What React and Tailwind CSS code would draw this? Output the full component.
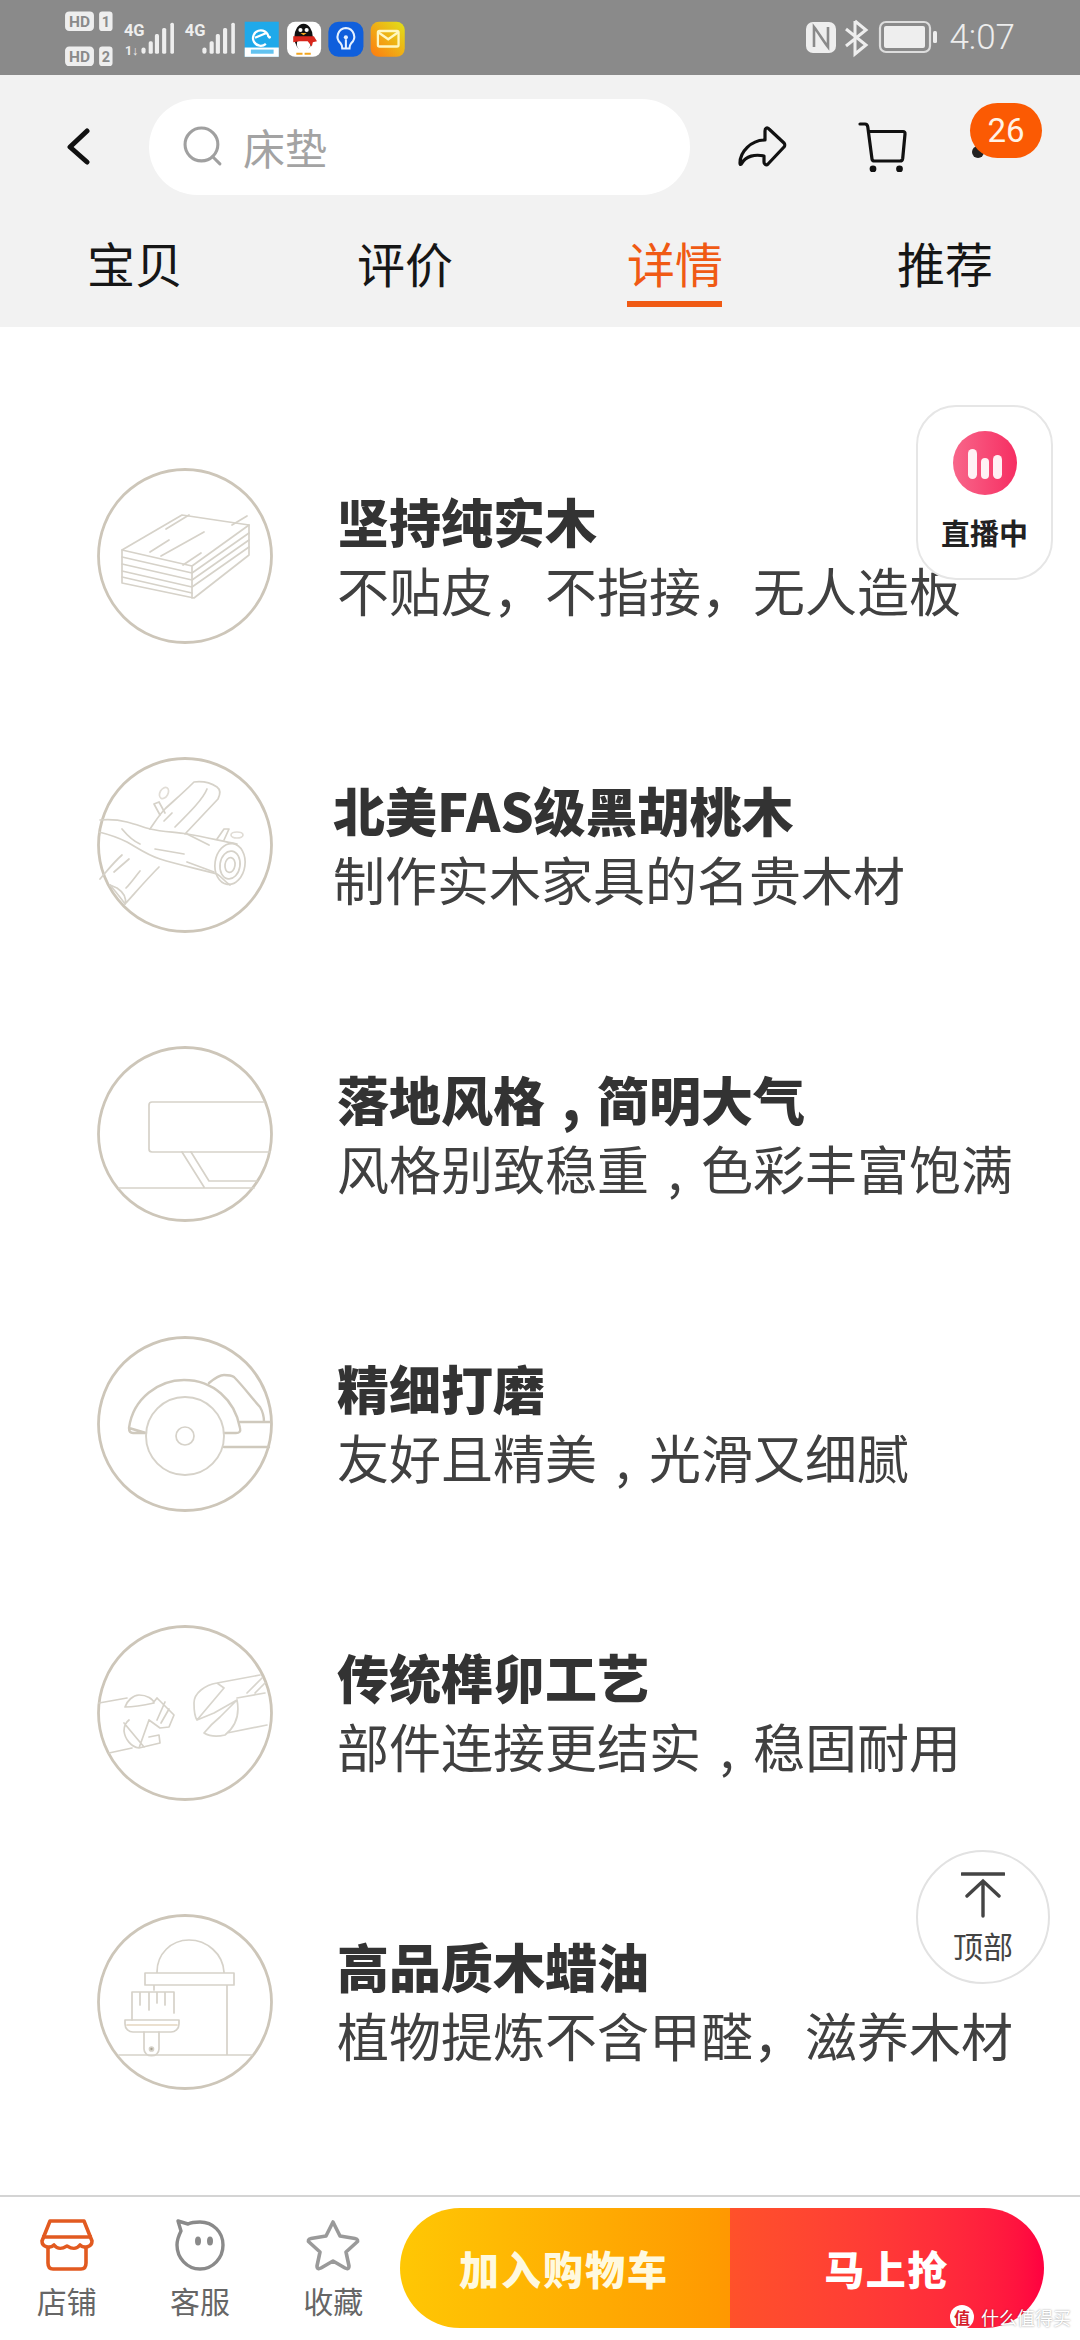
import React from "react";

const CJK = { fontFamily: '"Noto Sans CJK SC", sans-serif' };

function StatusLeft() {
  return (
    <svg width="413" height="77.5" viewBox="0 0 400 75" className="absolute left-0 top-0" fill="none">
      <rect x="63" y="11" width="28" height="19" rx="4" fill="#eee" />
      <text x="77" y="26" textAnchor="middle" fontSize="15" fontWeight="700" fill="#8a8a8a" fontFamily="Roboto">HD</text>
      <rect x="96" y="11" width="13" height="19" rx="3" fill="#eee" />
      <text x="102.5" y="26" textAnchor="middle" fontSize="14" fontWeight="700" fill="#8a8a8a" fontFamily="Roboto">1</text>
      <rect x="63" y="45" width="28" height="19" rx="4" fill="#eee" />
      <text x="77" y="60" textAnchor="middle" fontSize="15" fontWeight="700" fill="#8a8a8a" fontFamily="Roboto">HD</text>
      <rect x="96" y="45" width="13" height="19" rx="3" fill="#eee" />
      <text x="102.5" y="60" textAnchor="middle" fontSize="14" fontWeight="700" fill="#8a8a8a" fontFamily="Roboto">2</text>
      <text x="120" y="35" fontSize="16" fontWeight="700" fill="#eee" fontFamily="Roboto">4G</text>
      <text x="121" y="53" fontSize="12" fontWeight="700" fill="#eee" fontFamily="Roboto">1↓</text>
      <text x="179" y="35" fontSize="16" fontWeight="700" fill="#eee" fontFamily="Roboto">4G</text>
      <g fill="#eee">
        <rect x="137" y="46" width="4" height="6" rx="2" />
        <rect x="144" y="40" width="4" height="12" rx="1.5" />
        <rect x="150" y="33" width="4" height="19" rx="1.5" />
        <rect x="157" y="27" width="4" height="25" rx="1.5" />
        <rect x="165" y="22" width="3.5" height="30" rx="1.5" />
        <rect x="196" y="46" width="4" height="6" rx="2" />
        <rect x="203" y="40" width="4" height="12" rx="1.5" />
        <rect x="209" y="33" width="4" height="19" rx="1.5" />
        <rect x="216" y="27" width="4" height="25" rx="1.5" />
        <rect x="224" y="22" width="3.5" height="30" rx="1.5" />
      </g>
      {/* eleme */}
      <rect x="237" y="21" width="33" height="34" fill="#1fa9ea" />
      <rect x="237" y="46" width="33" height="9" fill="#fff" />
      <path d="M260 36a7.500 7.500 0 1 0-2.500 6.500M247 36.500l11-4.500" stroke="#fff" strokeWidth="2.200" />
      <circle cx="261" cy="36" r="1.400" fill="#fff" />
      <rect x="243" y="48" width="22" height="4" fill="#1fa9ea" opacity=".7" />
      {/* qq */}
      <rect x="278" y="21" width="33" height="34" rx="8" fill="#fff" />
      <ellipse cx="294" cy="36" rx="9" ry="13" fill="#111" />
      <ellipse cx="294" cy="43" rx="6.500" ry="7" fill="#fff" />
      <path d="M284 35h20l3 5-4 1-1 4-4-5h-8l-6 1z" fill="#d8271c" />
      <circle cx="291" cy="29" r="2" fill="#fff" />
      <circle cx="297" cy="29" r="2" fill="#fff" />
      <path d="M291 32h6l-3 2z" fill="#f2a51f" />
      <path d="M287 52h6M295 52h6" stroke="#f2a51f" strokeWidth="2" />
      {/* bulb */}
      <rect x="318" y="21" width="34" height="34" rx="10" fill="#0f5fdc" />
      <path d="M335 27a8.500 8.500 0 0 0-5 15c1 1 1.500 3 1.500 5h7c0-2 .5-4 1.500-5a8.500 8.500 0 0 0-5-15zM335 38v9" stroke="#e5f1ff" strokeWidth="2" />
      <circle cx="335" cy="36" r="2" fill="#e5f1ff" />
      {/* mail */}
      <defs>
        <linearGradient id="ml" x1="0" y1="1" x2="1" y2="0">
          <stop offset="0" stopColor="#ff7a10" />
          <stop offset="1" stopColor="#dfe21a" />
        </linearGradient>
      </defs>
      <rect x="359" y="21" width="33" height="34" rx="8" fill="url(#ml)" />
      <rect x="366" y="30" width="20" height="15" rx="1.500" stroke="#fff7c0" strokeWidth="2.200" />
      <path d="M366 31l10 7 10-7" stroke="#fff7c0" strokeWidth="2.200" />
    </svg>
  );
}

function StatusRight() {
  return (
    <div className="absolute right-[65px] top-0 flex h-[75px] items-center">
      <svg width="142" height="40" viewBox="-10 0 142 40" fill="none" className="mr-[11px]">
        <rect x="0" y="4" width="30" height="31" rx="7" fill="#eee" />
        <path d="M8 29V9C12 14 18 24 22 29V9" stroke="#8a8a8a" strokeWidth="2.600" />
        <path d="M49 3v33l11-9-20-16M49 3l11 9-20 16" stroke="#eee" strokeWidth="3" />
        <rect x="74" y="4" width="50" height="30" rx="6" stroke="#ddd" strokeWidth="2.200" />
        <rect x="78" y="8" width="41" height="22" rx="2" fill="#eee" />
        <rect x="127" y="13" width="4" height="12" rx="1.500" fill="#eee" />
      </svg>
      <span className="text-[35px] leading-none text-[#ededed]" style={{ fontFamily: "Roboto, sans-serif", fontWeight: 300 }}>4:07</span>
    </div>
  );
}

function Circle({ children }) {
  return (
    <svg width="176" height="176" viewBox="0 0 176 176" fill="none" className="shrink-0">
      <circle cx="88" cy="88" r="86.500" stroke="#cdc6b9" strokeWidth="2.800" />
      <g stroke="#d6d2c9" strokeWidth="1.700" strokeLinecap="round" strokeLinejoin="round">{children}</g>
    </svg>
  );
}

const I1 = (
  <Circle>
    <path d="M25 82L85 47L152 57V87L97 130L25 115Z" />
    <path d="M25 82L95 98L152 57M95 98V130" />
    <path d="M25 89L95 105L152 65M25 96L95 112L152 72M25 103L95 119L152 79M25 109L95 125" />
    <path d="M53 80L72 68M64 84L107 60M86 93L104 81M69 57L92 43M135 53L150 44" transform="translate(0 4)" />
  </Circle>
);
const I2 = (
  <Circle>
    <path d="M3 63C14 62 22 63 30 65C38 67 46 70 53 72C66 75 78 75 90 77C108 80 124 84 140 87" />
    <path d="M2 75C14 78 22 81 30 85C42 92 52 99 63 102C82 108 102 112 120 117C125 120 128 125 133 128" />
    <ellipse cx="133" cy="107" rx="15" ry="20.500" transform="rotate(8 133 107)" />
    <ellipse cx="133" cy="108" rx="10" ry="14" transform="rotate(8 133 108)" />
    <ellipse cx="133" cy="108" rx="5" ry="7.500" transform="rotate(8 133 108)" />
    <path d="M53 72C58 65 62 58 68 52C73 47 84 38 97 25C105 24 114 26 120 30C124 33 123 38 121 42L88 77" />
    <path d="M110 32C106 42 94 54 78 70M67 64L75 56" />
    <path d="M62 110C50 122 38 136 28 147C30 140 26 135 20 131L13 128M25 98C16 106 10 114 3 122M43 114C38 120 34 126 29 131M32 102L17 115" />
    <path d="M13 128C18 134 24 141 28 147" />
    <path d="M57 47L63 58M62 45L68 56M57 47L62 45" />
    <ellipse cx="67" cy="36" rx="4" ry="6" transform="rotate(30 67 36)" stroke="#e1ddd6" />
    <ellipse cx="140" cy="78" rx="6" ry="3" stroke="#e1ddd6" />
    <path d="M120 82L127 72L132 72L127 83" />
    <path d="M25 72C30 78 36 84 43 87M58 92L87 97M90 105L117 115M90 77L112 88" />
  </Circle>
);
const I3 = (
  <Circle>
    <path d="M167 56H55a3 3 0 0 0-3 3V103a3 3 0 0 0 3 3H173" />
    <path d="M85 106L107 141M94 106L112 135H160M22 142H157" />
  </Circle>
);
const I4 = (
  <Circle>
    <g stroke="#cfc9bd" strokeWidth="2.400">
      <path d="M32 92C36 62 62 44 87 44C116 44 138 64 143 92C144 96 142 97 139 97H127M49 97H36C33 97 32 95 32 92Z" />
      <path d="M112 47C118 42 122 39 127 39C131 39 134 39 137 41C146 50 154 61 163 71C166 76 167 81 167 86M143 86H173M127 111H172" />
    </g>
    <circle cx="88" cy="100" r="39" strokeWidth="1.900" />
    <circle cx="88" cy="100" r="9" />
  </Circle>
);
const I5 = (
  <Circle>
    <path d="M2 78L30 73M28 82C30 76 36 70 42 70C50 70 56 74 57 78C48 80 38 82 28 82ZM60 73L77 90L72 102L63 103L52 95M60 73L56 78M68 77L60 95M72 84L64 98M62 110L63 118L42 123L52 95M32 95C28 98 27 102 27 106C28 114 34 122 42 123M27 98L47 122M12 128L35 123M62 110L52 112" />
    <path d="M120 58C108 60 97 68 97 78C97 86 98 92 100 95L127 63L120 58ZM120 58L163 50M100 95L117 88L140 75M107 108C112 102 118 96 123 92L140 75C143 90 138 102 128 110C120 112 112 111 107 108ZM130 108L170 100M140 73L168 68M150 68L165 53M158 68L168 58" stroke="#d8d5cd" />
  </Circle>
);
const I6 = (
  <Circle>
    <path d="M60 58C60 40 74 26 92 26C110 26 126 40 127 58M48 59H137V71H48ZM130 71V141M57 71V76M22 141H155" />
    <path d="M35 78H77V99M35 78V106M43 79V91M52 79V96M60 79V89M68 79V91" />
    <path d="M28 106H82V110C82 115 78 118 74 118H36C32 118 28 115 28 110Z" />
    <path d="M30 111H80" stroke="#e5d6c0" />
    <path d="M47 118V135C47 144 62 144 62 135V118" />
    <circle cx="54.500" cy="135" r="2" fill="#a8a294" />
  </Circle>
);

const C = <span className="inline-block w-[1em] text-center">,</span>;

const rows = [
  { icon: I1, t: "坚持纯实木", s: "不贴皮，不指接，无人造板" },
  { icon: I2, t: "北美FAS级黑胡桃木", s: "制作实木家具的名贵木材", nudge: true },
  { icon: I3, t: <>落地风格{C}简明大气</>, s: <>风格别致稳重{C}色彩丰富饱满</> },
  { icon: I4, t: "精细打磨", s: <>友好且精美{C}光滑又细腻</> },
  { icon: I5, t: "传统榫卯工艺", s: <>部件连接更结实{C}稳固耐用</> },
  { icon: I6, t: "高品质木蜡油", s: "植物提炼不含甲醛，滋养木材" },
];

function Row({ r }) {
  return (
    <div className="flex h-[176px] items-center">
      {r.icon}
      <div className={`${r.nudge ? "ml-[60px]" : "ml-[64px]"} mb-[3px] flex flex-col`}>
        <div className="whitespace-nowrap text-[52px] font-black leading-[64px] text-[#333]">{r.t}</div>
        <div className="mt-[6px] whitespace-nowrap text-[52px] font-normal leading-[62px] text-[#404040]">{r.s}</div>
      </div>
    </div>
  );
}

function BottomItem({ icon, label }) {
  return (
    <div className="flex w-[133.500px] flex-col items-center">
      {icon}
      <span className="mt-[11px] text-[30px] leading-[36px] text-[#666]">{label}</span>
    </div>
  );
}

export default function App() {
  return (
    <div className="relative flex h-[2340px] w-[1080px] flex-col overflow-hidden bg-white" style={CJK}>
      <div className="relative h-[75px] shrink-0 bg-[#8a8a8a]">
        <StatusLeft />
        <StatusRight />
      </div>

      <div className="h-[252px] shrink-0 bg-[#f2f2f2]">
        <div className="flex h-[145px] items-center pb-[2px]">
          <svg width="26" height="38" viewBox="0 0 26 38" fill="none" className="ml-[65px]">
            <path d="M22 3L5 19L22 34" stroke="#111" strokeWidth="5" strokeLinecap="round" strokeLinejoin="round" />
          </svg>
          <div className="ml-[58px] flex h-[96px] w-[541px] items-center rounded-full bg-white">
            <svg width="41" height="41" viewBox="0 0 40 40" fill="none" className="ml-[34px]">
              <circle cx="18" cy="18" r="16" stroke="#a0a0a0" strokeWidth="3" />
              <path d="M29 30L36 37" stroke="#a0a0a0" strokeWidth="3" strokeLinecap="round" />
            </svg>
            <span className="ml-[19px] text-[42px] leading-none text-[#a3a3a3]">床垫</span>
          </div>
          <svg width="50" height="42" viewBox="0 0 50 42" fill="none" className="ml-[47px] mt-[1px]">
            <path d="M3 37C3 26 14 14 28 14V5C28 2 30 1 32 3L47 17C48 18 48 20 47 21L31 38C29 40 27 38 27 36V30C18 28 9 30 5 37C4 39 3 39 3 37Z" stroke="#111" strokeWidth="3.200" strokeLinejoin="round" />
          </svg>
          <svg width="50" height="50" viewBox="0 0 50 50" fill="none" className="ml-[71px] mt-[1px]">
            <path d="M2 2H7C9 2 9.500 3 9.800 5L14 37C14.200 38.500 15 39 16.500 39H42C43.500 39 44.500 38 44.700 36.500L47 12C47.200 10.500 46.500 9.500 45 9.500H11" stroke="#111" strokeWidth="3.200" strokeLinecap="round" strokeLinejoin="round" />
            <circle cx="15" cy="47" r="3.400" fill="#111" />
            <circle cx="41.500" cy="47" r="3.400" fill="#111" />
          </svg>
        </div>
        <div className="flex h-[107px]">
          {["宝贝", "评价", "详情", "推荐"].map((t, i) => (
            <div key={t} className="relative flex w-[270px] justify-center">
              <span className={`pt-[10px] text-[48px] leading-[64px] ${i === 2 ? "text-[#f05a14]" : "text-[#161616]"}`}>{t}</span>
              {i === 2 && <div className="absolute left-[87px] top-[81px] h-[6px] w-[95px] bg-[#f05a14]" />}
            </div>
          ))}
        </div>
      </div>

      <div className="relative flex-1 bg-white">
        <div className="flex flex-col gap-[113.200px] pl-[97px] pt-[141px]">
          {rows.map((r, i) => (
            <Row key={i} r={r} />
          ))}
        </div>
      </div>

      <div className="flex h-[145px] shrink-0 items-start border-t-2 border-[#d4d4d4] bg-white pt-[11px]">
        <div className="flex w-[400px] pt-[11px]">
          <BottomItem
            label="店铺"
            icon={
              <svg width="54" height="52" viewBox="0 0 54 52" fill="none" stroke="#e25a20" strokeWidth="3.600" strokeLinejoin="round">
                <path d="M10 2H44L52 22C52 28 44 30 40 26C36 31 32 30 27 27C22 30 18 31 14 26C10 30 2 28 2 22Z" />
                <path d="M2 18H52M8 29V44C8 48 10 50 13 50H41C44 50 46 48 46 44V29" />
              </svg>
            }
          />
          <BottomItem
            label="客服"
            icon={
              <svg width="50" height="52" viewBox="0 0 50 52" fill="none">
                <path d="M25 3C38 3 48 13 48 26S38 50 25 50S2 39 2 26C2 20 4 16 6 12L3 2L13 5C16 3.500 20 3 25 3Z" stroke="#8a8a8a" strokeWidth="3.400" strokeLinejoin="round" />
                <ellipse cx="23" cy="22" rx="3" ry="4.500" fill="#8a8a8a" />
                <ellipse cx="35" cy="22" rx="3" ry="4.500" fill="#8a8a8a" />
              </svg>
            }
          />
          <BottomItem
            label="收藏"
            icon={
              <svg width="54" height="52" viewBox="0 0 54 52" fill="none">
                <path d="M27 3L34 17L49 19.500C52 20 52 22 51 23L40 33L43 47C43 50 41 50 39 49L27 42L15 49C13 50 11 50 11 47L14 33L3 23C2 22 2 20 5 19.500L20 17Z" stroke="#9a9a9a" strokeWidth="3.600" strokeLinejoin="round" />
              </svg>
            }
          />
        </div>
        <div className="flex h-[120px] w-[644px] overflow-hidden rounded-full text-white">
          <div className="flex w-[330px] items-center justify-center bg-gradient-to-r from-[#ffc704] to-[#ff9801]">
            <span className="ml-[-2px] text-[40px] font-black tracking-[2px] text-[#fff9df]">加入购物车</span>
          </div>
          <div className="flex flex-1 items-center justify-center bg-gradient-to-r from-[#ff512a] to-[#ff0040]">
            <span className="ml-[-1px] text-[40px] font-black tracking-[1.500px]">马上抢</span>
          </div>
        </div>
      </div>

      {/* overlays */}
      <div className="absolute left-[972px] top-[146px] h-[12px] w-[12px] rounded-full bg-[#222]" />
      <div className="absolute left-[970px] top-[103px] flex h-[55px] w-[72px] items-center justify-center rounded-full bg-[#fb5a03] text-[33px] leading-none text-[#fff3e6]" style={{ fontFamily: "Roboto, sans-serif" }}>
        26
      </div>

      <div className="absolute left-[916px] top-[405px] flex h-[175px] w-[137px] flex-col items-center rounded-[40px] border-2 border-[#e6e6e6] bg-white pt-[24px]">
        <svg width="64" height="64" viewBox="0 0 64 64">
          <defs>
            <linearGradient id="lv" x1="0" x2="1" y1="0" y2="0">
              <stop offset="0" stopColor="#f8668a" />
              <stop offset="1" stopColor="#f62e62" />
            </linearGradient>
          </defs>
          <circle cx="32" cy="32" r="32" fill="url(#lv)" />
          <rect x="15" y="18" width="9" height="30" rx="4.500" fill="#fff" opacity=".92" />
          <rect x="28" y="27" width="8" height="21" rx="4" fill="#fff" opacity=".92" />
          <rect x="40" y="24" width="9" height="24" rx="4.500" fill="#fff" opacity=".92" />
        </svg>
        <span className="mt-[19px] text-[29px] font-bold leading-[36px] text-[#222]">直播中</span>
      </div>

      <div className="absolute left-[916px] top-[1850px] flex h-[134px] w-[134px] flex-col items-center rounded-full border-2 border-[#e2e2e2] bg-white pt-[20px]">
        <svg width="44" height="46" viewBox="0 0 44 46" fill="none" stroke="#444" strokeWidth="3.400" strokeLinecap="round">
          <path d="M1 2H43M22 9V44M6 24L22 9L38 24" />
        </svg>
        <span className="mt-[10px] text-[30px] leading-[34px] text-[#444]">顶部</span>
      </div>

      <div className="absolute left-[950px] top-[2305px] flex items-center">
        <div className="flex h-[24px] w-[24px] items-center justify-center rounded-full bg-white text-[16px] font-bold leading-none text-[#d5202c]">值</div>
        <span className="ml-[7px] whitespace-nowrap text-[18px] leading-none text-white [text-shadow:0_0_2px_rgba(0,0,0,0.45)]">什么值得买</span>
      </div>
    </div>
  );
}
